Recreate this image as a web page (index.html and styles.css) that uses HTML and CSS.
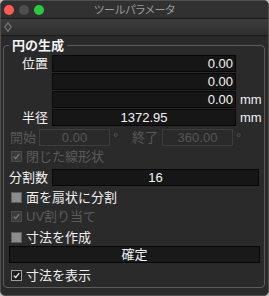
FILE: index.html
```html
<!DOCTYPE html>
<html lang="ja">
<head>
<meta charset="utf-8">
<link rel="stylesheet" href="styles.css">
</head>
<body>
<div class="window">
  <div class="titlebar">
    <div class="lights">
      <span class="light red"></span>
      <span class="light gray"></span>
      <span class="light green"></span>
    </div>
    <div class="title">ツールパラメータ</div>
    <div></div>
  </div>
  <div class="toolbar">
    <svg class="diamond" width="8" height="10" viewBox="0 0 8 10"><polygon points="4,0.8 7.2,5 4,9.2 0.8,5" fill="none" stroke="#707070" stroke-width="1.4"/></svg>
  </div>
  <div class="content">
    <div class="group">
      <div class="legend">円の生成</div>
      <div class="row r-first"><span class="label">位置</span><span class="field num-right">0.00</span></div>
      <div class="row r-tight"><span class="label"></span><span class="field num-right">0.00</span></div>
      <div class="row r-tight"><span class="label"></span><span class="field num-right">0.00</span><span class="unit">mm</span></div>
      <div class="row r-tight"><span class="label">半径</span><span class="field num-center">1372.95</span><span class="unit">mm</span></div>
      <div class="row r-angle">
        <span class="dlabel start">開始</span><span class="field small disabled">0.00</span><span class="deg">°</span>
        <span class="dlabel end">終了</span><span class="field small disabled">360.00</span><span class="deg">°</span>
      </div>
      <div class="row check-row r-closed"><span class="cb cb-disabled"><svg viewBox="0 0 11 11"><path d="M2.2 5.6 L4.5 8 L8.8 2.6" fill="none" stroke="#7a7a7a" stroke-width="1.6"/></svg></span><span class="ctext disabled-text">閉じた線形状</span></div>
      <div class="row r-div"><span class="label">分割数</span><span class="field wide num-center">16</span></div>
      <div class="row check-row r-fan"><span class="cb cb-off"></span><span class="ctext">面を扇状に分割</span></div>
      <div class="row check-row r-uv"><span class="cb cb-disabled"><svg viewBox="0 0 11 11"><path d="M2.2 5.6 L4.5 8 L8.8 2.6" fill="none" stroke="#7a7a7a" stroke-width="1.6"/></svg></span><span class="ctext disabled-text">UV割り当て</span></div>
      <div class="row check-row r-dim"><span class="cb cb-off"></span><span class="ctext">寸法を作成</span></div>
      <div class="row r-btn"><span class="button">確定</span></div>
      <div class="row check-row r-show"><span class="cb cb-on"><svg viewBox="0 0 11 11"><path d="M2.2 5.6 L4.5 8 L8.8 2.6" fill="none" stroke="#f2f2f2" stroke-width="1.6"/></svg></span><span class="ctext">寸法を表示</span></div>
    </div>
  </div>
</div>
</body>
</html>
```

FILE: styles.css
```css
* { box-sizing: border-box; }
html, body { margin: 0; padding: 0; background: #bdbdbd; }
body {
  font-family: "Liberation Sans", "Noto Sans CJK JP", sans-serif;
  font-size: 13px;
  color: #f0f0f0;
}
.window {
  width: 269px;
  height: 296px;
  background: #2a2a2a;
  border: 1px solid #505050;
  border-radius: 5px;
  overflow: hidden;
  display: flex;
  flex-direction: column;
}
.titlebar {
  height: 18px;
  border-bottom: 1px solid #1b1b1b;
  background: #313131;
  display: grid;
  grid-template-columns: 1fr auto 1fr;
  align-items: center;
}
.lights { display: flex; gap: 5px; padding-left: 3px; }
.light { width: 10px; height: 10px; border-radius: 50%; display: block; }
.red { background: #fd5b55; }
.gray { background: #4e4e4e; }
.green { background: #2bc840; }
.title {
  font-family: "Noto Sans CJK JP", sans-serif;
  font-size: 11px;
  line-height: 17px;
  color: #9a9a9a;
  font-feature-settings: "palt";
}
.toolbar {
  height: 17px;
  border-bottom: 1px solid #1c1c1c;
  background: linear-gradient(#3d3d3d, #2f2f2f);
  display: flex;
  align-items: center;
  padding-left: 3px;
}
.diamond { display: block; }
.content {
  flex: 1;
  padding: 9px 3px 0 2px;
}
.group {
  position: relative;
  border: 1px solid #5c5c5c;
  border-radius: 4px;
  padding: 9px 0 3px 0;
  display: flex;
  flex-direction: column;
}
.legend {
  position: absolute;
  left: 5px;
  top: -9px;
  padding: 0 3px;
  background: #2a2a2a;
  font-weight: bold;
  line-height: 16px;
  color: #f4f4f4;
  font-family: "Noto Sans CJK JP", sans-serif;
}
.row { display: flex; align-items: center; height: 17px; }
.r-first { margin-top: 0; }
.r-tight { margin-top: 1px; }
.r-angle { margin-top: 3px; }
.r-closed { margin-top: 1px; height: 19px; }
.r-div { margin-top: 3px; }
.r-fan { margin-top: 2px; height: 19px; }
.r-uv { height: 19px; }
.r-dim { margin-top: 3px; }
.r-btn { margin-top: 0; }
.r-show { margin-top: 4px; }
.label {
  width: 44px;
  text-align: right;
  margin-right: 4px;
  line-height: 17px;
  color: #f2f2f2;
}
.field {
  width: 184px;
  height: 17px;
  background: #161616;
  border: 1px solid #070707;
  line-height: 15px;
  color: #f4f4f4;
  font-family: "Liberation Sans", sans-serif;
  white-space: nowrap;
}
.num-right { text-align: right; padding-right: 2px; }
.num-center { text-align: center; }
.field.wide { width: 207px; }
.field.small { width: 71px; text-align: center; }
.field.disabled {
  background: #2a2a2a;
  border-color: #3e3e3e;
  color: #555555;
}
.unit { margin-left: 4px; color: #f0f0f0; }
.dlabel { color: #585858; line-height: 17px; }
.dlabel.start { margin-left: 6px; width: 29px; }
.dlabel.end { width: 30px; }
.deg { color: #585858; width: 22px; padding-left: 3px; }
.check-row { padding-left: 7px; }
.cb {
  width: 11px;
  height: 11px;
  display: block;
  flex: none;
}
.cb svg { display: block; width: 9px; height: 9px; }
.cb-off { background: #8c8c8c; border: 1px solid #5e5e5e; }
.cb-disabled { background: #3b3b3b; border: 1px solid #4c4c4c; }
.cb-on { background: #1e1e1e; border: 1px solid #a0a0a0; }
.ctext { margin-left: 4px; line-height: 17px; color: #f0f0f0; }
.disabled-text { color: #5a5a5a; }
.button {
  margin-left: 5px;
  width: 251px;
  height: 17px;
  background: #191919;
  border: 1px solid #060606;
  text-align: center;
  line-height: 15px;
  color: #f0f0f0;
}
```
